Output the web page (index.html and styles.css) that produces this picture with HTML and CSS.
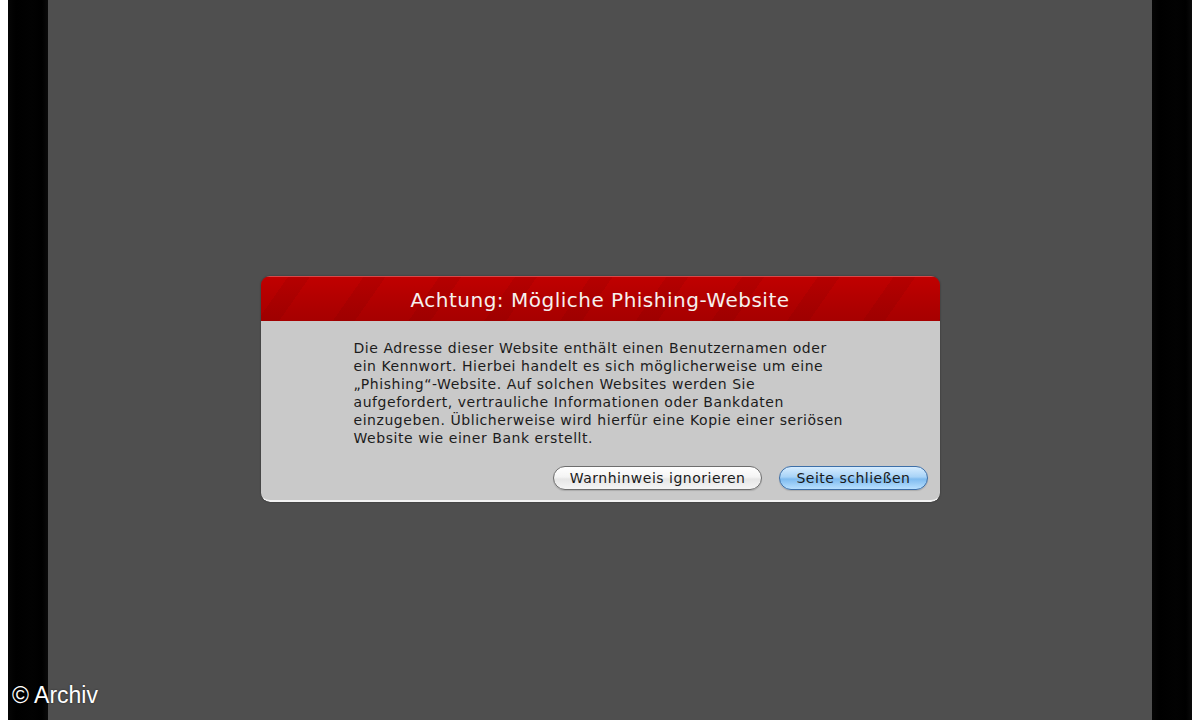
FILE: index.html
```html
<!DOCTYPE html>
<html lang="de">
<head>
<meta charset="utf-8">
<title>Phishing-Warnung</title>
<link rel="stylesheet" href="styles.css">
</head>
<body>
<div class="screen">
  <div class="edge"></div>
  <div class="bar"></div>
  <main class="stage">
    <section class="dialog">
      <header class="dialog-head">
        <h1 class="dialog-title">Achtung: Mögliche Phishing-Website</h1>
      </header>
      <div class="dialog-body">
        <p class="message">Die Adresse dieser Website enthält einen Benutzernamen oder<br>ein Kennwort. Hierbei handelt es sich möglicherweise um eine<br>„Phishing“-Website. Auf solchen Websites werden Sie<br>aufgefordert, vertrauliche Informationen oder Bankdaten<br>einzugeben. Üblicherweise wird hierfür eine Kopie einer seriösen<br>Website wie einer Bank erstellt.</p>
        <div class="actions">
          <button class="btn">Warnhinweis ignorieren</button>
          <button class="btn btn-default">Seite schließen</button>
        </div>
      </div>
    </section>
  </main>
  <div class="bar"></div>
  <div class="edge"></div>
  <div class="credit">© Archiv</div>
</div>
</body>
</html>
```

FILE: styles.css
```css
html, body {
  margin: 0;
  padding: 0;
  background: #ffffff;
}
.screen {
  position: relative;
  width: 1200px;
  height: 720px;
  display: flex;
  overflow: hidden;
}
.edge {
  width: 8px;
  background: #ffffff;
  flex: none;
}
.bar {
  width: 40px;
  flex: none;
  background: linear-gradient(90deg, #050505 0, #000 20%, #020202 60%, #000 85%, #0a0a0a 100%);
}
.stage {
  flex: 1;
  background: #4f4f4f;
  display: flex;
  justify-content: center;
  align-items: flex-start;
  padding-top: 276px;
}
.dialog {
  width: 679px;
  height: 226px;
  border-radius: 9px;
  display: flex;
  flex-direction: column;
  overflow: hidden;
  box-shadow: 0 0 2px rgba(0,0,0,0.4);
  font-family: "DejaVu Sans", "Noto Sans", sans-serif;
}
.dialog-head {
  height: 45px;
  flex: none;
  display: flex;
  align-items: center;
  justify-content: center;
  border-top: 1px solid #d8484a;
  box-sizing: border-box;
  background:
    repeating-linear-gradient(125deg, rgba(255,40,40,0) 0 22px, rgba(90,0,0,0.10) 22px 40px, rgba(255,40,40,0) 40px 62px),
    linear-gradient(180deg, #c00000 0%, #b20000 50%, #a60000 100%);
}
.dialog-title {
  margin: 0;
  color: #f6f0ee;
  font-size: 20px;
  font-weight: normal;
  letter-spacing: 0.5px;
  padding-top: 1px;
}
.dialog-body {
  flex: 1;
  background: #c9c9c9;
  border-radius: 0 0 9px 9px;
  border-bottom: 2px solid #f2f2f2;
  box-sizing: border-box;
  padding: 18px 12px 0 93px;
  display: flex;
  flex-direction: column;
}
.message {
  margin: 0;
  font-size: 14px;
  letter-spacing: 0.55px;
  line-height: 18px;
  color: #1c1c1c;
}
.actions {
  display: flex;
  justify-content: flex-end;
  gap: 17px;
  margin-top: 19px;
}
.btn {
  font-family: "DejaVu Sans", "Noto Sans", sans-serif;
  font-size: 14px;
  letter-spacing: 0.5px;
  color: #1a1a1a;
  height: 24px;
  padding: 0 16px;
  border-radius: 12px;
  border: 1px solid #6e6e6e;
  background: linear-gradient(180deg, #ffffff 0%, #f4f4f4 45%, #e6e6e6 55%, #f5f5f5 100%);
  box-shadow: 0 1px 1px rgba(0,0,0,0.15);
}
.btn-default {
  border-color: #3d6fa8;
  background: linear-gradient(180deg, #d6ecff 0%, #a8d3f7 45%, #7fbbef 55%, #b8e0ff 100%);
}
.credit {
  position: absolute;
  left: 12px;
  top: 682px;
  color: #ffffff;
  font-family: "Liberation Sans", Arial, sans-serif;
  font-size: 23px;
  text-shadow: 0 0 2px rgba(0,0,0,0.6);
}
```
